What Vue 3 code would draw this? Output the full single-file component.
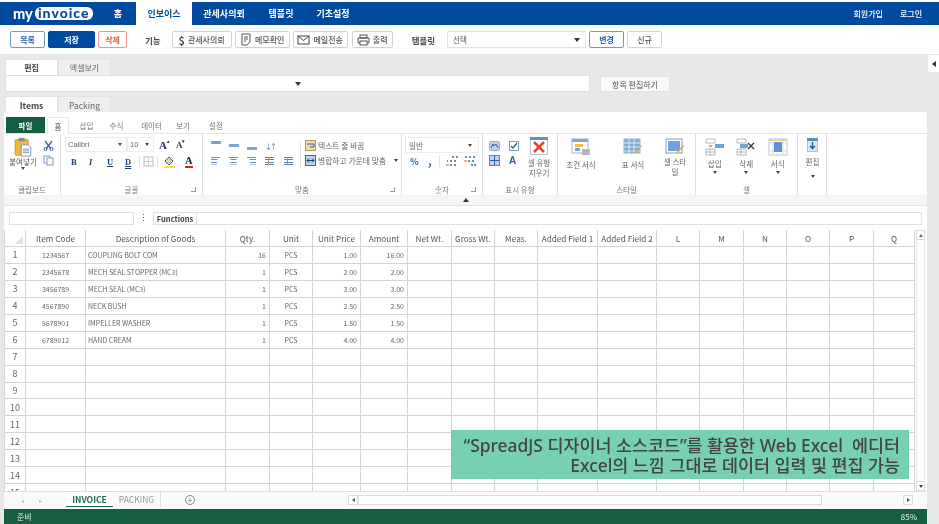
<script setup>
const navItems = [
  { label: '홈', width: 36 },
  { label: '인보이스', width: 56, active: true },
  { label: '관세사의뢰', width: 64 },
  { label: '템플릿', width: 50 },
  { label: '기초설정', width: 54 },
]

const columns = [
  { label: 'Item Code', width: 60 },
  { label: 'Description of Goods', width: 140 },
  { label: 'Qty.', width: 44 },
  { label: 'Unit', width: 43 },
  { label: 'Unit Price', width: 48 },
  { label: 'Amount', width: 47 },
  { label: 'Net Wt.', width: 44 },
  { label: 'Gross Wt.', width: 43 },
  { label: 'Meas.', width: 43 },
  { label: 'Added Field 1', width: 60 },
  { label: 'Added Field 2', width: 59 },
  { label: 'L', width: 43 },
  { label: 'M', width: 44 },
  { label: 'N', width: 43 },
  { label: 'O', width: 43 },
  { label: 'P', width: 44 },
  { label: 'Q', width: 41 },
]

const gridColumns = '21px ' + columns.map((c) => c.width + 'px').join(' ')

const items = [
  ['1234567', 'COUPLING BOLT COM', '16', 'PCS', '1.00', '16.00'],
  ['2345678', 'MECH SEAL STOPPER (MC3)', '1', 'PCS', '2.00', '2.00'],
  ['3456789', 'MECH SEAL (MC3)', '1', 'PCS', '3.00', '3.00'],
  ['4567890', 'NECK BUSH', '1', 'PCS', '2.50', '2.50'],
  ['5678901', 'IMPELLER WASHER', '1', 'PCS', '1.50', '1.50'],
  ['6789012', 'HAND CREAM', '1', 'PCS', '4.00', '4.00'],
]

const rows = Array.from({ length: 15 }, (_, i) => items[i] || [])

function alignOf(col) {
  if (col === 0 || col === 3) return 'center'
  if (col === 1) return 'left'
  if (col === 2 || col === 4 || col === 5) return 'right'
  return ''
}
</script>

<template>
  <div class="page">
    <header class="nav">
      <div class="logo"><span class="logo-my">my</span><span class="logo-pill">invoice</span></div>
      <a v-for="n in navItems" :key="n.label" class="nav-item" :class="{ active: n.active }" :style="{ width: n.width + 'px' }">{{ n.label }}</a>
      <div class="nav-right">
        <a>회원가입</a>
        <a>로그인</a>
      </div>
    </header>

    <div class="toolbar">
      <button class="btn outline-blue w35">목록</button>
      <button class="btn solid-blue w47">저장</button>
      <button class="btn outline-red w29">삭제</button>
      <span class="tool-label first">기능</span>
      <button class="btn w60">
        <span class="dollar">$</span>관세사의뢰
      </button>
      <button class="btn w55">
        <svg width="12" height="13" viewBox="0 0 12 13"><path d="M2 1h8v8l-3 3H2z" fill="#fff" stroke="#555" /><path d="M4 4h4M4 6h4M4 8h2" stroke="#555" /></svg>
        메모확인
      </button>
      <button class="btn w55 mail">
        <svg width="13" height="10" viewBox="0 0 13 10"><rect x="1" y="1" width="11" height="8" fill="#fff" stroke="#444" /><path d="M1 1l5.500 4.500L12 1" fill="none" stroke="#444" /></svg>
        메일전송
      </button>
      <button class="btn w41">
        <svg width="13" height="12" viewBox="0 0 13 12"><rect x="3" y="1" width="7" height="3" fill="none" stroke="#555" /><path d="M3 9H1V4h11v5h-2" fill="none" stroke="#555" /><rect x="3" y="7" width="7" height="4" fill="#fff" stroke="#555" /></svg>
        출력
      </button>
      <span class="tool-label second">템플릿</span>
      <div class="template-select"><span>선택</span><i class="tri-down dark"></i></div>
      <button class="btn outline-blue w35">변경</button>
      <button class="btn w35">신규</button>
    </div>

    <main class="workspace">
      <div class="tabs first-tabs">
        <a class="tab active">편집</a>
        <a class="tab">엑셀보기</a>
      </div>
      <div class="edit-row">
        <div class="edit-bar"><i class="tri-down dark"></i></div>
        <button class="edit-btn">항목 편집하기</button>
      </div>
      <div class="tabs second-tabs">
        <a class="tab active strong">Items</a>
        <a class="tab latin">Packing</a>
      </div>

      <section class="sheet">
        <div class="ribbon-tabs">
          <a class="file-tab">파일</a>
          <a class="r-tab active">홈</a>
          <a class="r-tab" style="width: 35px">삽입</a>
          <a class="r-tab" style="width: 25px">수식</a>
          <a class="r-tab" style="width: 45px">데이터</a>
          <a class="r-tab" style="width: 18px">보기</a>
          <a class="r-tab" style="width: 48px">설정</a>
        </div>

        <div class="ribbon">
          <div class="group clip">
            <div class="group-body clip-body">
              <div class="paste">
                <svg width="18" height="20" viewBox="0 0 20 23">
                  <rect x="1" y="3" width="15" height="18" rx="1" fill="#f1b840" stroke="#c9922a" />
                  <rect x="5" y="1" width="7" height="4" fill="#8a8a8a" />
                  <path d="M8 9h8l3 3v10H8z" fill="#fff" stroke="#6d8fb5" />
                  <path d="M10 14h7M10 16h7M10 18h7" stroke="#6d8fb5" />
                </svg>
                <span>붙여넣기</span>
                <i class="tri-down tiny"></i>
              </div>
              <div class="clip-side">
                <svg width="11" height="11" viewBox="0 0 11 11"><path d="M2 1l6 8M9 1L3 9" stroke="#3566a8" stroke-width="1.300" /><circle cx="2.500" cy="9" r="1.500" fill="none" stroke="#3566a8" /><circle cx="8.500" cy="9" r="1.500" fill="none" stroke="#3566a8" /></svg>
                <svg width="11" height="11" viewBox="0 0 11 11"><rect x="1" y="1" width="6" height="7" fill="#fff" stroke="#7d9cc0" /><rect x="4" y="3" width="6" height="7" fill="#fff" stroke="#7d9cc0" /></svg>
              </div>
            </div>
            <div class="group-label">클립보드</div>
          </div>

          <div class="group font">
            <div class="group-body font-body">
              <div class="font-row">
                <div class="combo w62"><span>Calibri</span><i class="tri-down tiny"></i></div>
                <div class="combo w27"><span>10</span><i class="tri-down tiny"></i></div>
                <span class="grow-a big">A<sup>▴</sup></span>
                <span class="grow-a small">A<sup>▾</sup></span>
              </div>
              <div class="font-row tools">
                <b class="fmt">B</b>
                <i class="fmt">I</i>
                <u class="fmt">U</u>
                <span class="fmt dbl">D</span>
                <span class="v-sep a"></span>
                <svg width="11" height="11" viewBox="0 0 11 11"><rect x="1" y="1" width="9" height="9" fill="none" stroke="#bbb" /><path d="M5.500 1v9M1 5.500h9" stroke="#ccc" /></svg>
                <span class="v-sep b"></span>
                <svg width="13" height="12" viewBox="0 0 13 12"><path d="M6 1l4 4-4 4-4-4z" fill="#d8d8d8" stroke="#555" /><rect x="1" y="10" width="11" height="2" fill="#f0e24b" /></svg>
                <span class="color-a">A</span>
              </div>
              <i class="launcher"></i>
            </div>
            <div class="group-label">글꼴</div>
          </div>

          <div class="group align">
            <div class="group-body align-body">
              <div class="align-grid">
                <span class="al top"></span><span class="al middle"></span><span class="al bottom"></span><span class="al-sort">↓↑</span><span></span>
                <span class="al-lines left"></span><span class="al-lines center"></span><span class="al-lines right"></span><span class="indent"></span><span class="indent"></span>
              </div>
              <span class="v-sep tall"></span>
              <div class="wrap-list">
                <div class="wrap-row">
                  <svg width="11" height="11" viewBox="0 0 11 11"><rect x="0.500" y="0.500" width="10" height="10" fill="#f2dca6" stroke="#b09a6c" /><path d="M2 4h7v3H5" fill="none" stroke="#3566a8" /></svg>
                  <span>텍스트 줄 바꿈</span>
                </div>
                <div class="wrap-row">
                  <svg width="11" height="11" viewBox="0 0 11 11"><rect x="0.500" y="0.500" width="10" height="10" fill="#bcd3ec" stroke="#3566a8" /><path d="M2 5.500h7M4 3.500L2 5.500l2 2M7 3.500l2 2-2 2" fill="none" stroke="#24426e" /></svg>
                  <span>병합하고 가운데 맞춤</span>
                  <i class="tri-down tiny merge-tri"></i>
                </div>
              </div>
              <i class="launcher"></i>
            </div>
            <div class="group-label">맞춤</div>
          </div>

          <div class="group number">
            <div class="group-body number-body">
              <div class="combo num-combo"><span>일반</span><i class="tri-down tiny"></i></div>
              <div class="num-tools">
                <span class="pct">%</span>
                <span class="comma">,</span>
                <span class="v-sep"></span>
                <svg class="dec" width="12" height="10" viewBox="0 0 12 10"><path d="M6 1h2M10 1h2M1 5h1M4 5h2M8 5h2M4 9h2M8 9h2" stroke="#3566a8" stroke-width="1.600" /><path d="M0 9h3" stroke="#e08a2e" stroke-width="1.400" /></svg>
                <svg class="dec" width="12" height="10" viewBox="0 0 12 10"><path d="M1 1h2M5 1h2M9 1h2M4 5h2M8 5h2M7 9h2M10 9h2" stroke="#3566a8" stroke-width="1.600" /><path d="M0 5h3" stroke="#e08a2e" stroke-width="1.400" /></svg>
              </div>
              <i class="launcher"></i>
            </div>
            <div class="group-label">숫자</div>
          </div>

          <div class="group kind">
            <div class="group-body kind-body">
              <div class="kind-icons">
                <svg width="11" height="10" viewBox="0 0 11 10"><rect x="0.500" y="0.500" width="10" height="9" rx="1" fill="#bcd3ec" stroke="#8fb0d6" /><path d="M2 7l2-4 1 2 2-2 2 4" fill="none" stroke="#2d5f9e" /></svg>
                <svg width="10" height="10" viewBox="0 0 10 10"><rect x="0.500" y="0.500" width="9" height="9" fill="#fff" stroke="#7d9cc0" /><path d="M2 5l2 2 4-5" fill="none" stroke="#2d5f9e" stroke-width="1.300" /></svg>
                <svg width="11" height="11" viewBox="0 0 11 11"><rect x="0.500" y="0.500" width="10" height="10" fill="#bcd3ec" stroke="#5f88b8" /><path d="M5.500 1v9M1 5.500h9" stroke="#2d5f9e" /></svg>
                <span class="kind-a">A</span>
              </div>
              <div class="big-btn clear">
                <svg width="18" height="18" viewBox="0 0 18 18"><rect x="0.500" y="0.500" width="17" height="17" fill="#fff" stroke="#b6c3d3" /><rect x="0" y="0" width="18" height="3" fill="#5d8fc7" /><path d="M4 5l10 10M14 5L4 15" stroke="#e2492b" stroke-width="2.600" /></svg>
                <span>셀 유형<br />지우기</span>
              </div>
            </div>
            <div class="group-label">표시 유형</div>
          </div>

          <div class="group style">
            <div class="group-body style-body">
              <div class="big-btn w46 one-line">
                <svg width="20" height="18" viewBox="0 0 20 18"><rect x="1" y="1" width="16" height="14" fill="#fff" stroke="#9fb3ca" /><rect x="1" y="1" width="16" height="3" fill="#7fa9d8" /><rect x="4" y="6" width="8" height="3" fill="#f0c04a" /><rect x="4" y="10" width="5" height="3" fill="#6fa3dc" /><rect x="11" y="11" width="8" height="6" fill="#b7b7b7" /></svg>
                <span>조건 서식</span>
              </div>
              <div class="big-btn w46 one-line table-format">
                <svg width="20" height="18" viewBox="0 0 20 18"><rect x="1" y="1" width="16" height="14" fill="#7fa9d8" stroke="#9fb3ca" /><path d="M1 5h16M1 9h16M1 13h16M6 1v14M11 1v14" stroke="#dfe9f5" /><path d="M11 15l7-8 1 1-7 8z" fill="#e8a33d" /></svg>
                <span>표 서식</span>
              </div>
              <div class="big-btn w46 cell-style">
                <svg width="20" height="18" viewBox="0 0 20 18"><rect x="1" y="1" width="16" height="14" fill="#fff" stroke="#8d9cae" /><rect x="3" y="3" width="12" height="10" fill="#6fa3dc" /><path d="M11 15l7-8 1 1-7 8z" fill="#e8a33d" /></svg>
                <span>셀 스타<br />일</span>
              </div>
            </div>
            <div class="group-label">스타일</div>
          </div>

          <div class="group cell">
            <div class="group-body cell-body">
              <div class="big-btn w31">
                <svg width="20" height="18" viewBox="0 0 20 18"><path d="M1 1h9v4H1zM1 11h9v6H1zM1 14h9M5 11v6" fill="#fff" stroke="#a9b8c8" /><rect x="10" y="6" width="9" height="4" fill="#6fa3dc" /><rect x="4" y="7" width="3" height="2" fill="#f0a83a" /></svg>
                <span>삽입</span>
                <i class="tri-down tiny"></i>
              </div>
              <div class="big-btn w31">
                <svg width="20" height="18" viewBox="0 0 20 18"><path d="M1 1h9v4H1zM1 11h9v6H1zM1 14h9M5 11v6" fill="#fff" stroke="#a9b8c8" /><rect x="4" y="6" width="8" height="4" fill="#6fa3dc" /><path d="M12 5l6 6M18 5l-6 6" stroke="#333" stroke-width="1.300" /></svg>
                <span>삭제</span>
                <i class="tri-down tiny"></i>
              </div>
              <div class="big-btn w31">
                <svg width="20" height="18" viewBox="0 0 20 18"><rect x="1" y="1" width="18" height="16" fill="#fff" stroke="#bcc7d3" /><path d="M1 5h18M1 13h18M5 1v16M15 1v16" stroke="#d3dbe3" /><rect x="1" y="1" width="18" height="2" fill="#f1cf8a" /><rect x="6" y="4" width="8" height="10" fill="#5d94d2" /></svg>
                <span>서식</span>
                <i class="tri-down tiny"></i>
              </div>
            </div>
            <div class="group-label">셀</div>
          </div>

          <div class="group edit">
            <div class="group-body edit-body">
              <div class="big-btn w29">
                <svg width="11" height="14" viewBox="0 0 11 14"><rect x="0.500" y="0.500" width="10" height="13" fill="#dbe8f6" stroke="#a9c2de" /><rect x="0" y="0" width="11" height="3" fill="#5d8fc7" /><path d="M5.500 4v6M3 8l2.500 2.500L8 8" fill="none" stroke="#1f5ea8" stroke-width="1.500" /></svg>
                <span>편집</span>
                <i class="tri-down tiny edit-tri"></i>
              </div>
            </div>
          </div>
        </div>

        <div class="collapse-bar"><i class="tri-up"></i></div>

        <div class="formula-bar">
          <div class="name-box"></div>
          <span class="dots">⋮</span>
          <div class="fn-label">Functions</div>
          <div class="fn-input"></div>
        </div>

        <div class="grid-area">
          <div class="grid" :style="{ gridTemplateColumns: gridColumns }">
            <div class="cell-h corner"><i></i></div>
            <div v-for="c in columns" :key="c.label" class="cell-h">{{ c.label }}</div>
            <template v-for="(row, r) in rows" :key="r">
              <div class="cell-h row-no">{{ r + 1 }}</div>
              <div v-for="(c, i) in columns" :key="c.label" class="cell-d" :class="alignOf(i)">{{ row[i] }}</div>
            </template>
          </div>
          <div class="v-scroll">
            <span class="sb-btn"><i class="tri-up small"></i></span>
            <span class="sb-thumb"></span>
            <span class="sb-btn"><i class="tri-down tiny"></i></span>
          </div>
        </div>

        <div class="sheet-tabs">
          <span class="sheet-nav">◂</span>
          <span class="sheet-nav">▸</span>
          <a class="s-tab active">INVOICE</a>
          <a class="s-tab">PACKING</a>
          <span class="s-add">+</span>
          <div class="h-scroll">
            <span class="sb-btn"><i class="tri-left"></i></span>
            <span class="h-thumb"></span>
            <span class="sb-btn"><i class="tri-right"></i></span>
          </div>
        </div>

        <footer class="status"><span>준비</span><span>85%</span></footer>
      </section>

      <button class="side-toggle"><i class="tri-left dark"></i></button>
    </main>

    <div class="callout">
      <p>“SpreadJS 디자이너 소스코드”를 활용한 Web Excel&nbsp; 에디터</p>
      <p>Excel의 느낌 그대로 데이터 입력 및 편집 가능</p>
    </div>
  </div>
</template>

<style>
html,
body {
  margin: 0;
  background: #fff;
}
</style>

<style scoped>
.page {
  position: relative;
  width: 939px;
  height: 524px;
  overflow: hidden;
  display: flex;
  flex-direction: column;
  background: #fff;
  font-family: "Noto Sans CJK KR", "Noto Sans", sans-serif;
  font-size: 8px;
  color: #555;
  /* the reference is a slightly soft, rescaled capture */
  filter: blur(0.3px);
}
a {
  display: block;
}
p {
  margin: 0;
}
button {
  font-family: inherit;
  padding: 0;
  cursor: pointer;
}

/* triangles */
.tri-down,
.tri-up,
.tri-left,
.tri-right {
  display: block;
  width: 0;
  height: 0;
  border-style: solid;
  border-color: transparent;
}
.tri-down {
  border-width: 4px 3px 0 3px;
  border-top-color: #555;
}
.tri-down.dark {
  border-top-color: #333;
}
.tri-down.tiny {
  border-width: 3px 2px 0 2px;
  border-top-color: #444;
}
.tri-up {
  border-width: 0 3px 4px 3px;
  border-bottom-color: #333;
}
.tri-up.small {
  border-width: 0 2px 3px 2px;
  border-bottom-color: #666;
}
.tri-left {
  border-width: 2px 3px 2px 0;
  border-right-color: #555;
}
.tri-left.dark {
  border-width: 3px 4px 3px 0;
  border-right-color: #333;
}
.tri-right {
  border-width: 2px 0 2px 3px;
  border-left-color: #555;
}

/* top nav */
.nav {
  margin-top: 2px;
  height: 23px;
  flex: none;
  display: flex;
  align-items: center;
  background: #004a9e;
  color: #fff;
  font-size: 9px;
  font-weight: 700;
}
.logo {
  width: 100px;
  padding-left: 13px;
  box-sizing: border-box;
  display: flex;
  align-items: center;
  font-family: Lato, sans-serif;
  font-weight: 900;
}
.logo-my {
  font-size: 14.500px;
  line-height: 14px;
  margin-right: 2px;
}
.logo-pill {
  background: #fff;
  color: #004a9e;
  border-radius: 6px;
  height: 13px;
  line-height: 12px;
  width: 58px;
  text-align: center;
  font-size: 14px;
  letter-spacing: 1px;
}
.nav-item {
  height: 23px;
  line-height: 23px;
  text-align: center;
  flex: none;
}
.nav-item.active {
  background: #fff;
  color: #004a9e;
}
.nav-right {
  margin-left: auto;
  display: flex;
  gap: 17px;
  padding-right: 17px;
  font-weight: 500;
  font-size: 8px;
}

/* toolbar */
.toolbar {
  height: 29px;
  flex: none;
  display: flex;
  align-items: center;
  padding-left: 10px;
  background: #fff;
}
.btn {
  height: 17px;
  box-sizing: border-box;
  flex: none;
  display: flex;
  align-items: center;
  justify-content: center;
  gap: 3px;
  margin-right: 3px;
  background: #fff;
  border: 1px solid #d3d3d3;
  border-radius: 2px;
  font-size: 8px;
  font-weight: 500;
  color: #555;
}
.w29 { width: 29px; }
.w35 { width: 35px; }
.w41 { width: 41px; }
.w47 { width: 47px; }
.w55 { width: 55px; }
.w60 { width: 60px; }
.btn.mail {
  margin-right: 4px;
}
.btn.outline-blue {
  border-color: #6e9cc4;
  color: #1a5a9c;
  font-weight: 700;
}
.btn.solid-blue {
  background: #004a9e;
  border-color: #004a9e;
  color: #fff;
  font-weight: 700;
}
.btn.outline-red {
  border-color: #e79a82;
  color: #e0623d;
  font-weight: 700;
}
.dollar {
  font-size: 11px;
  color: #333;
}
.tool-label {
  font-size: 8.500px;
  font-weight: 700;
  color: #444;
}
.tool-label.first {
  margin-left: 15px;
  margin-right: 11px;
}
.tool-label.second {
  margin-left: 16px;
  margin-right: 12px;
}
.template-select {
  width: 139px;
  height: 17px;
  box-sizing: border-box;
  flex: none;
  margin-right: 3px;
  padding: 0 5px;
  display: flex;
  align-items: center;
  justify-content: space-between;
  border: 1px solid #e2e2e2;
  font-size: 7.500px;
}

/* workspace */
.workspace {
  position: relative;
  flex: 1;
  min-height: 0;
  display: flex;
  flex-direction: column;
  background: #e8e8e8;
}
.tabs {
  display: flex;
  height: 16px;
  flex: none;
  padding-left: 5px;
}
.first-tabs {
  margin-top: 5px;
}
.second-tabs {
  margin-top: 4px;
}
.tab {
  width: 53px;
  height: 16px;
  line-height: 16px;
  box-sizing: border-box;
  text-align: center;
  background: #efefef;
  border: 1px solid #e2e2e2;
  border-bottom: 0;
  color: #666;
  font-size: 8px;
}
.tab.active {
  background: #fff;
  font-weight: 700;
  color: #444;
}
.tab.latin,
.tab.strong {
  font-size: 8.500px;
}
.edit-row {
  display: flex;
  height: 17px;
  flex: none;
  padding-left: 5px;
}
.edit-bar {
  width: 585px;
  background: #fff;
  border: 1px solid #e0e0e0;
  box-sizing: border-box;
  display: flex;
  align-items: center;
  justify-content: center;
}
.edit-btn {
  width: 70px;
  margin-left: 10px;
  margin-top: 1px;
  background: #f9f9f9;
  border: 1px solid #e2e2e2;
  color: #555;
  font-size: 8px;
}

.side-toggle {
  position: absolute;
  top: 1px;
  right: 0;
  width: 11px;
  height: 17px;
  display: flex;
  align-items: center;
  justify-content: center;
  background: #fff;
  border: 0;
}

/* spreadsheet panel */
.sheet {
  flex: 1;
  min-height: 0;
  width: 923px;
  margin-left: 4px;
  display: flex;
  flex-direction: column;
  background: #fff;
}
.ribbon-tabs {
  height: 17px;
  margin-top: 5px;
  flex: none;
  padding-left: 2px;
  display: flex;
  align-items: stretch;
  font-size: 7.500px;
  color: #777;
}
.file-tab {
  width: 39px;
  background: #155e41;
  color: #fff;
  font-weight: 700;
  text-align: center;
  line-height: 17px;
}
.r-tab {
  text-align: center;
  line-height: 17px;
}
.r-tab.active {
  width: 22px;
  margin-left: 2px;
  box-sizing: border-box;
  border: 1px solid #e6e6e6;
  border-bottom: 1px solid #fff;
  color: #555;
  position: relative;
  z-index: 1;
}
.ribbon {
  height: 62px;
  flex: none;
  display: flex;
  border-top: 1px solid #e4e4e4;
  box-sizing: border-box;
  margin-top: -1px;
}
.group {
  flex: none;
  box-sizing: border-box;
  border-right: 1px solid #e0e0e0;
  display: flex;
  flex-direction: column;
}
.group-body {
  position: relative;
  flex: 1;
  min-height: 0;
}
.group-label {
  height: 11px;
  text-align: center;
  line-height: 11px;
  color: #777;
  font-size: 7.500px;
}
.clip { width: 57px; }
.font { width: 142px; }
.align { width: 199px; }
.number { width: 81px; }
.kind { width: 75px; }
.style { width: 138px; }
.cell { width: 102px; }
.edit { width: 29px; }

.launcher {
  position: absolute;
  right: 6px;
  bottom: -8px;
  width: 4px;
  height: 4px;
  border-right: 1px solid #999;
  border-bottom: 1px solid #999;
}

.clip-body {
  display: flex;
  padding: 3px 0 0 3px;
  gap: 4px;
}
.paste {
  width: 32px;
  display: flex;
  flex-direction: column;
  align-items: center;
  font-size: 7.500px;
  line-height: 10px;
  color: #555;
}
.clip-side {
  display: flex;
  flex-direction: column;
  gap: 4px;
  padding-top: 3px;
}

.font-body {
  padding: 3px 0 0 4px;
}
.font-row {
  display: flex;
  align-items: center;
}
.combo {
  height: 15px;
  box-sizing: border-box;
  border: 1px solid #ededed;
  display: flex;
  align-items: center;
  justify-content: space-between;
  padding: 0 4px 0 2px;
  font-family: "Liberation Sans", sans-serif;
  font-size: 7.500px;
  color: #666;
}
.w62 { width: 62px; }
.w27 { width: 27px; }
.grow-a {
  font-family: "Liberation Serif", serif;
  font-weight: 700;
  color: #223a5e;
  line-height: 12px;
}
.grow-a sup {
  font-size: 5px;
  vertical-align: top;
  line-height: 6px;
}
.grow-a.big {
  font-size: 11px;
  margin-left: 5px;
}
.grow-a.small {
  font-size: 9px;
  margin-left: 6px;
}
.tools {
  margin-top: 3px;
  padding-left: 5px;
  height: 13px;
}
.fmt {
  width: 18px;
  flex: none;
  text-align: left;
  font-family: "Liberation Serif", serif;
  font-size: 8.500px;
  font-weight: 700;
  color: #1f3f73;
  padding-left: 1px;
  box-sizing: border-box;
}
.fmt.dbl {
  text-decoration: underline double;
}
.v-sep {
  width: 1px;
  height: 11px;
  background: #e2e2e2;
  flex: none;
}
.v-sep.a {
  margin: 0 3px 0 -3px;
}
.v-sep.b {
  margin: 0 5px 0 3px;
}
.v-sep.tall {
  height: 27px;
  margin: 4px 4px 0 0;
}
.color-a {
  margin-left: 9px;
  font-family: "Liberation Serif", serif;
  font-weight: 700;
  font-size: 10.500px;
  line-height: 10px;
  color: #222;
  border-bottom: 2px solid #e0231b;
}

.align-body {
  display: flex;
  padding-top: 3px;
}
.align-grid {
  width: 97px;
  padding: 1px 0 0 8px;
  box-sizing: border-box;
  display: grid;
  grid-template-columns: 18px 18px 18px 19px 18px;
  grid-auto-rows: 15px;
  align-items: center;
  height: 31px;
}
.al {
  display: block;
  width: 10px;
  height: 9px;
  position: relative;
}
.al::after {
  content: "";
  position: absolute;
  left: 0;
  right: 0;
  height: 3px;
  background: #7ba5d6;
}
.al.top::after { top: 0; }
.al.middle::after { top: 3px; }
.al.bottom::after { bottom: 0; }
.al-sort {
  font-size: 7px;
  color: #3566a8;
  letter-spacing: -2px;
}
.al-lines {
  display: block;
  width: 9px;
  height: 8px;
  background: repeating-linear-gradient(#6d90b8 0 1px, transparent 1px 2.500px);
}
.al-lines.center {
  clip-path: polygon(0 0, 100% 0, 100% 30%, 85% 30%, 85% 100%, 15% 100%, 15% 30%, 0 30%);
}
.al-lines.left {
  clip-path: polygon(0 0, 100% 0, 100% 30%, 70% 30%, 70% 100%, 0 100%);
}
.al-lines.right {
  clip-path: polygon(0 0, 100% 0, 100% 100%, 30% 100%, 30% 30%, 0 30%);
}
.indent {
  display: block;
  width: 9px;
  height: 8px;
  background:
    linear-gradient(90deg, transparent 3px, #e08a2e 3px 4px, transparent 4px),
    repeating-linear-gradient(#4f7fb8 0 1px, transparent 1px 2.500px);
}
.wrap-list {
  display: flex;
  flex-direction: column;
  gap: 3px;
  padding-top: 2px;
}
.wrap-row {
  display: flex;
  align-items: center;
  gap: 2px;
  height: 12px;
  font-size: 7.800px;
  color: #666;
}
.merge-tri {
  margin-left: 6px;
}

.number-body {
  padding: 3px 0 0 3px;
}
.num-combo {
  width: 74px;
  height: 16px;
  padding-left: 3px;
  padding-right: 6px;
  font-family: inherit;
}
.num-tools {
  display: flex;
  align-items: center;
  margin-top: 1px;
  height: 14px;
  padding-left: 5px;
}
.pct {
  width: 16px;
  font-weight: 700;
  font-size: 9px;
  color: #2d5f9e;
}
.comma {
  width: 11px;
  text-align: center;
  font-weight: 700;
  font-size: 10px;
  line-height: 8px;
  color: #2d5f9e;
}
.num-tools .v-sep {
  margin: 0 6px 0 4px;
}
.dec {
  flex: none;
  margin-right: 6px;
}

.kind-body {
  display: flex;
  padding: 4px 0 0 6px;
}
.kind-icons {
  width: 40px;
  display: grid;
  grid-template-columns: 20px 20px;
  grid-auto-rows: 15px;
  align-items: center;
  height: 30px;
}
.kind-a {
  font-family: "Liberation Sans", sans-serif;
  font-size: 10px;
  font-weight: 700;
  line-height: 10px;
  color: #2d5f9e;
}
.big-btn {
  display: flex;
  flex-direction: column;
  align-items: center;
  flex: none;
  font-size: 7.500px;
  line-height: 10px;
  color: #666;
  text-align: center;
}
.big-btn svg {
  margin-bottom: 3px;
}
.clear {
  margin-top: -1px;
  width: 20px;
  white-space: nowrap;
}
.w46 { width: 46px; }
.w31 { width: 31.500px; }
.w29 { width: 29px; }
.style-body,
.cell-body,
.edit-body {
  display: flex;
  padding-top: 4px;
}
.style-body .big-btn svg {
  margin-bottom: 1px;
}
.style-body .one-line svg {
  margin-bottom: 4px;
}
.table-format {
  margin-left: 6px;
}
.cell-style {
  margin-left: -4px;
}
.cell-body {
  padding-left: 3px;
}
.cell-body .big-btn svg {
  margin-bottom: 3px;
}
.cell-body .big-btn .tri-down {
  margin-top: 2px;
}
.edit-body .big-btn svg {
  margin-bottom: 5px;
}
.edit-tri {
  margin-top: 8px;
}

.collapse-bar {
  height: 11px;
  flex: none;
  background: #f5f5f5;
  display: flex;
  align-items: center;
  justify-content: center;
  border-bottom: 1px solid #e4e4e4;
  box-sizing: border-box;
}

.formula-bar {
  height: 22px;
  flex: none;
  box-sizing: border-box;
  padding: 6px 5px 3px 5px;
  display: flex;
  align-items: stretch;
}
.name-box {
  width: 125px;
  box-sizing: border-box;
  border: 1px solid #e0e0e0;
}
.dots {
  width: 19px;
  text-align: center;
  line-height: 12px;
  font-size: 9px;
  color: #555;
}
.fn-label {
  width: 44px;
  box-sizing: border-box;
  border: 1px solid #e0e0e0;
  text-align: center;
  line-height: 11px;
  font-size: 7.500px;
  font-weight: 700;
  color: #444;
}
.fn-input {
  flex: 1;
  box-sizing: border-box;
  border: 1px solid #e0e0e0;
  border-left: 0;
}

.grid-area {
  flex: 1;
  min-height: 0;
  display: flex;
  overflow: hidden;
  padding-top: 2px;
  box-sizing: border-box;
}
.grid {
  display: grid;
  grid-template-rows: 17px;
  grid-auto-rows: 16.950px;
  flex: none;
  border-left: 1px solid #d8d8d8;
}
.cell-h {
  box-sizing: border-box;
  background: #fff;
  border-right: 1px solid #d4d4d4;
  border-bottom: 1px solid #d4d4d4;
  display: flex;
  align-items: center;
  justify-content: center;
  font-size: 8.200px;
  color: #555;
  white-space: nowrap;
  overflow: hidden;
}
.corner {
  position: relative;
}
.corner i {
  position: absolute;
  right: 2px;
  bottom: 2px;
  width: 0;
  height: 0;
  border-style: solid;
  border-width: 0 0 8px 8px;
  border-color: transparent transparent #e2e2e2 transparent;
}
.row-no {
  font-size: 9px;
  color: #666;
}
.cell-d {
  box-sizing: border-box;
  border-right: 1px solid #d4d4d4;
  border-bottom: 1px solid #d4d4d4;
  display: flex;
  align-items: center;
  font-size: 7px;
  color: #666;
  white-space: nowrap;
  overflow: hidden;
}
.cell-d.center {
  justify-content: center;
}
.cell-d.left {
  padding-left: 2px;
}
.cell-d.right {
  justify-content: flex-end;
  padding-right: 3px;
}

.v-scroll {
  width: 9px;
  margin-left: 1px;
  flex: none;
  display: flex;
  flex-direction: column;
  background: #fff;
}
.sb-btn {
  width: 10px;
  height: 10px;
  flex: none;
  box-sizing: border-box;
  border: 1px solid #dcdcdc;
  display: flex;
  align-items: center;
  justify-content: center;
  background: #fff;
}
.v-scroll .sb-btn {
  width: 9px;
}
.sb-thumb {
  flex: 1;
  width: 9px;
  box-sizing: border-box;
  border-left: 1px solid #e6e6e6;
  border-right: 1px solid #e6e6e6;
}

.sheet-tabs {
  height: 18px;
  flex: none;
  display: flex;
  align-items: stretch;
  border-top: 1px solid #e0e0e0;
  box-sizing: border-box;
  background: #fafafa;
}
.sheet-nav {
  width: 18px;
  line-height: 17px;
  text-align: center;
  font-size: 6px;
  color: #bbb;
}
.sheet-nav:first-child {
  margin-left: 9px;
}
.sheet-nav + .s-tab {
  margin-left: 17px;
}
.s-tab {
  line-height: 15px;
  width: 48px;
  box-sizing: border-box;
  text-align: center;
  font-size: 8.500px;
  color: #999;
  border-right: 1px solid #ddd;
  margin-bottom: 2px;
}
.s-tab.active {
  width: 47px;
  color: #1d6b4d;
  font-weight: 700;
  background: #fff;
  border-right: 0;
  border-bottom: 1px solid #1d6b4d;
}
.s-add {
  width: 10px;
  height: 10px;
  margin: 3px 0 0 24px;
  box-sizing: border-box;
  border: 1px solid #888;
  border-radius: 50%;
  text-align: center;
  line-height: 8px;
  font-size: 8px;
  color: #666;
}
.h-scroll {
  display: flex;
  align-items: center;
  margin-left: 153px;
  width: 566px;
  height: 12px;
  margin-top: 2px;
}
.h-thumb {
  width: 464px;
  height: 10px;
  margin-right: 81px;
  box-sizing: border-box;
  border: 1px solid #dcdcdc;
  background: #fff;
}

.status {
  height: 15px;
  flex: none;
  display: flex;
  align-items: center;
  justify-content: space-between;
  padding: 0 10px 0 13px;
  background: #155e41;
  color: #e6efe9;
  font-size: 8px;
}

/* caption laid over the screenshot */
.callout {
  position: absolute;
  left: 451px;
  top: 430px;
  width: 458px;
  height: 49px;
  box-sizing: border-box;
  padding: 5px 9px 0 0;
  background: #78d0b2;
  color: #444;
  text-align: right;
  font-family: "Noto Sans", "Noto Sans CJK KR", sans-serif;
  font-size: 17.400px;
  font-weight: 500;
  line-height: 20px;
  white-space: nowrap;
}
</style>
